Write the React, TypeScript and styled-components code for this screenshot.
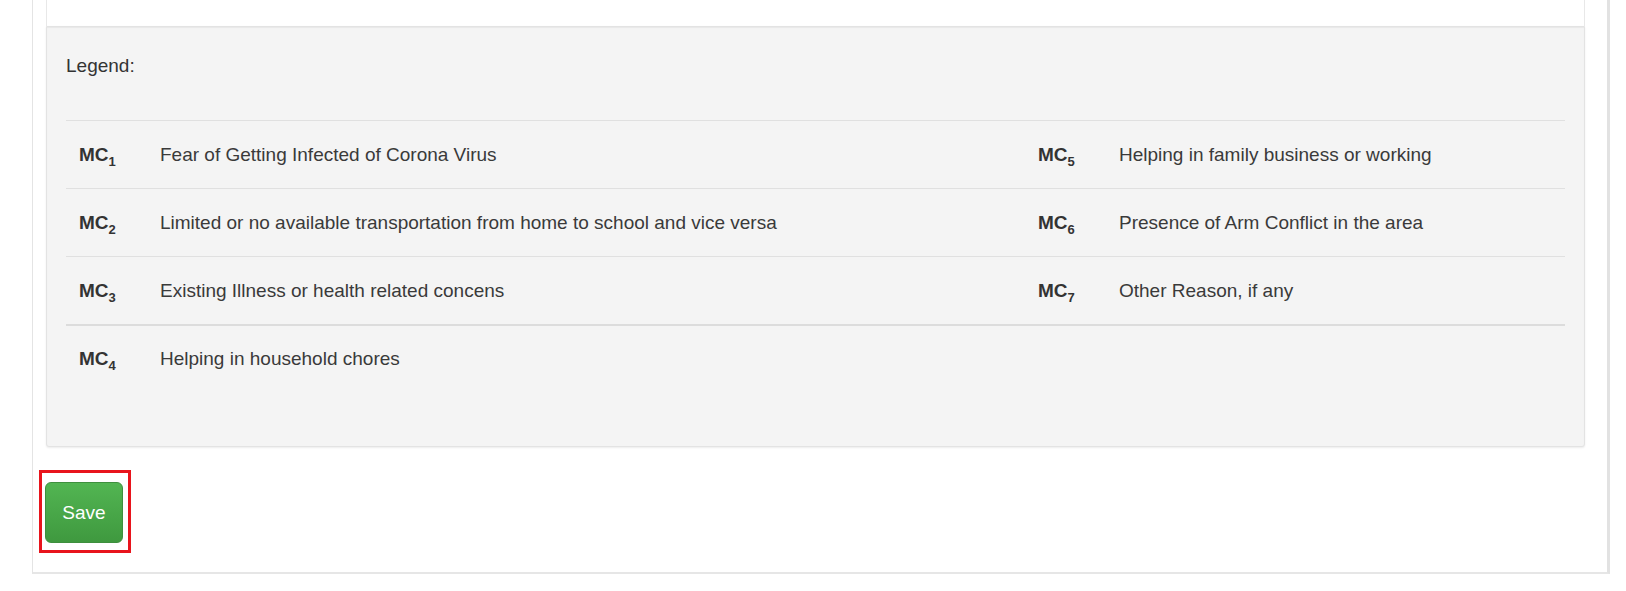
import { FC } from "react";
import styled, { createGlobalStyle } from "styled-components";

const GlobalStyle = createGlobalStyle`
  html, body {
    margin: 0;
    padding: 0;
    background: #ffffff;
  }
  body {
    font-family: "Liberation Sans", Arial, Helvetica, sans-serif;
    color: #333333;
  }
`;

const Card = styled.div`
  margin-left: 32px;
  width: 1578px;
  box-sizing: border-box;
  padding: 0 22px 19px 6px;
  border: 1px solid #e4e4e4;
  border-top: none;
  border-right: 3px solid #e2e2e2;
  border-bottom: 2px solid #e6e6e6;
`;

const TopPanel = styled.div`
  margin-left: 7px;
  height: 26px;
  box-sizing: border-box;
  background: #ffffff;
  border: 1px solid #e8e8e8;
  border-top: none;
  border-bottom: none;
`;

const Well = styled.div`
  margin-left: 7px;
  box-sizing: border-box;
  padding: 26px 19px 54px;
  background: #f4f4f4;
  border: 1px solid #e3e3e3;
  border-radius: 0 0 3px 3px;
  box-shadow: inset 0 1px 1px rgba(0, 0, 0, 0.05), 0 1px 2px rgba(0, 0, 0, 0.08);
`;

const LegendTitle = styled.div`
  font-size: 19px;
  line-height: 26px;
  color: #333333;
  margin-bottom: 41px;
`;

const LegendTable = styled.div`
  display: grid;
  grid-template-columns: 81px 878px 81px 1fr;
`;

const Row = styled.div<{ $thick?: boolean }>`
  display: contents;

  & > div {
    border-top: ${({ $thick }) => ($thick ? "2px solid #dcdcdc" : "1px solid #e0e0e0")};
    height: ${({ $thick }) => ($thick ? "66px" : "67px")};
  }
`;

const Code = styled.div`
  display: flex;
  align-items: center;
  padding-left: 13px;
  font-size: 19px;
  font-weight: bold;
  color: #333333;
`;

const CodeText = styled.span`
  line-height: 26px;

  sub {
    font-size: 13px;
    line-height: 0;
    vertical-align: -5px;
  }
`;

const Desc = styled.div`
  display: flex;
  align-items: center;
  padding-left: 13px;
  font-size: 19px;
  color: #3a3a3a;
  white-space: nowrap;
`;

const Actions = styled.div`
  margin-top: 23px;
  display: flex;
`;

const Highlight = styled.div`
  border: 3px solid #e8141c;
  padding: 9px 5px 7px 3px;
`;

const SaveButton = styled.button`
  width: 78px;
  height: 61px;
  border: 1px solid #3e8f3e;
  border-radius: 6px;
  background: linear-gradient(to bottom, #52b552 0%, #3f993f 100%);
  color: #ffffff;
  font-family: "Liberation Sans", Arial, sans-serif;
  font-size: 19px;
  cursor: pointer;
  padding: 0;
`;

interface Item {
  n: number;
  text: string;
}

const left: Item[] = [
  { n: 1, text: "Fear of Getting Infected of Corona Virus" },
  { n: 2, text: "Limited or no available transportation from home to school and vice versa" },
  { n: 3, text: "Existing Illness or health related concens" },
  { n: 4, text: "Helping in household chores" },
];

const right: (Item | null)[] = [
  { n: 5, text: "Helping in family business or working" },
  { n: 6, text: "Presence of Arm Conflict in the area" },
  { n: 7, text: "Other Reason, if any" },
  null,
];

const App: FC = () => {
  return (
    <>
      <GlobalStyle />
      <Card>
        <TopPanel />
        <Well>
          <LegendTitle>Legend:</LegendTitle>
          <LegendTable>
            {left.map((item, i) => {
              const r = right[i];
              return (
                <Row key={item.n} $thick={i === 3}>
                  <Code>
                    <CodeText>
                      MC<sub>{item.n}</sub>
                    </CodeText>
                  </Code>
                  <Desc>{item.text}</Desc>
                  <Code>
                    {r && (
                      <CodeText>
                        MC<sub>{r.n}</sub>
                      </CodeText>
                    )}
                  </Code>
                  <Desc>{r ? r.text : ""}</Desc>
                </Row>
              );
            })}
          </LegendTable>
        </Well>
        <Actions>
          <Highlight>
            <SaveButton>Save</SaveButton>
          </Highlight>
        </Actions>
      </Card>
    </>
  );
};

export default App;
